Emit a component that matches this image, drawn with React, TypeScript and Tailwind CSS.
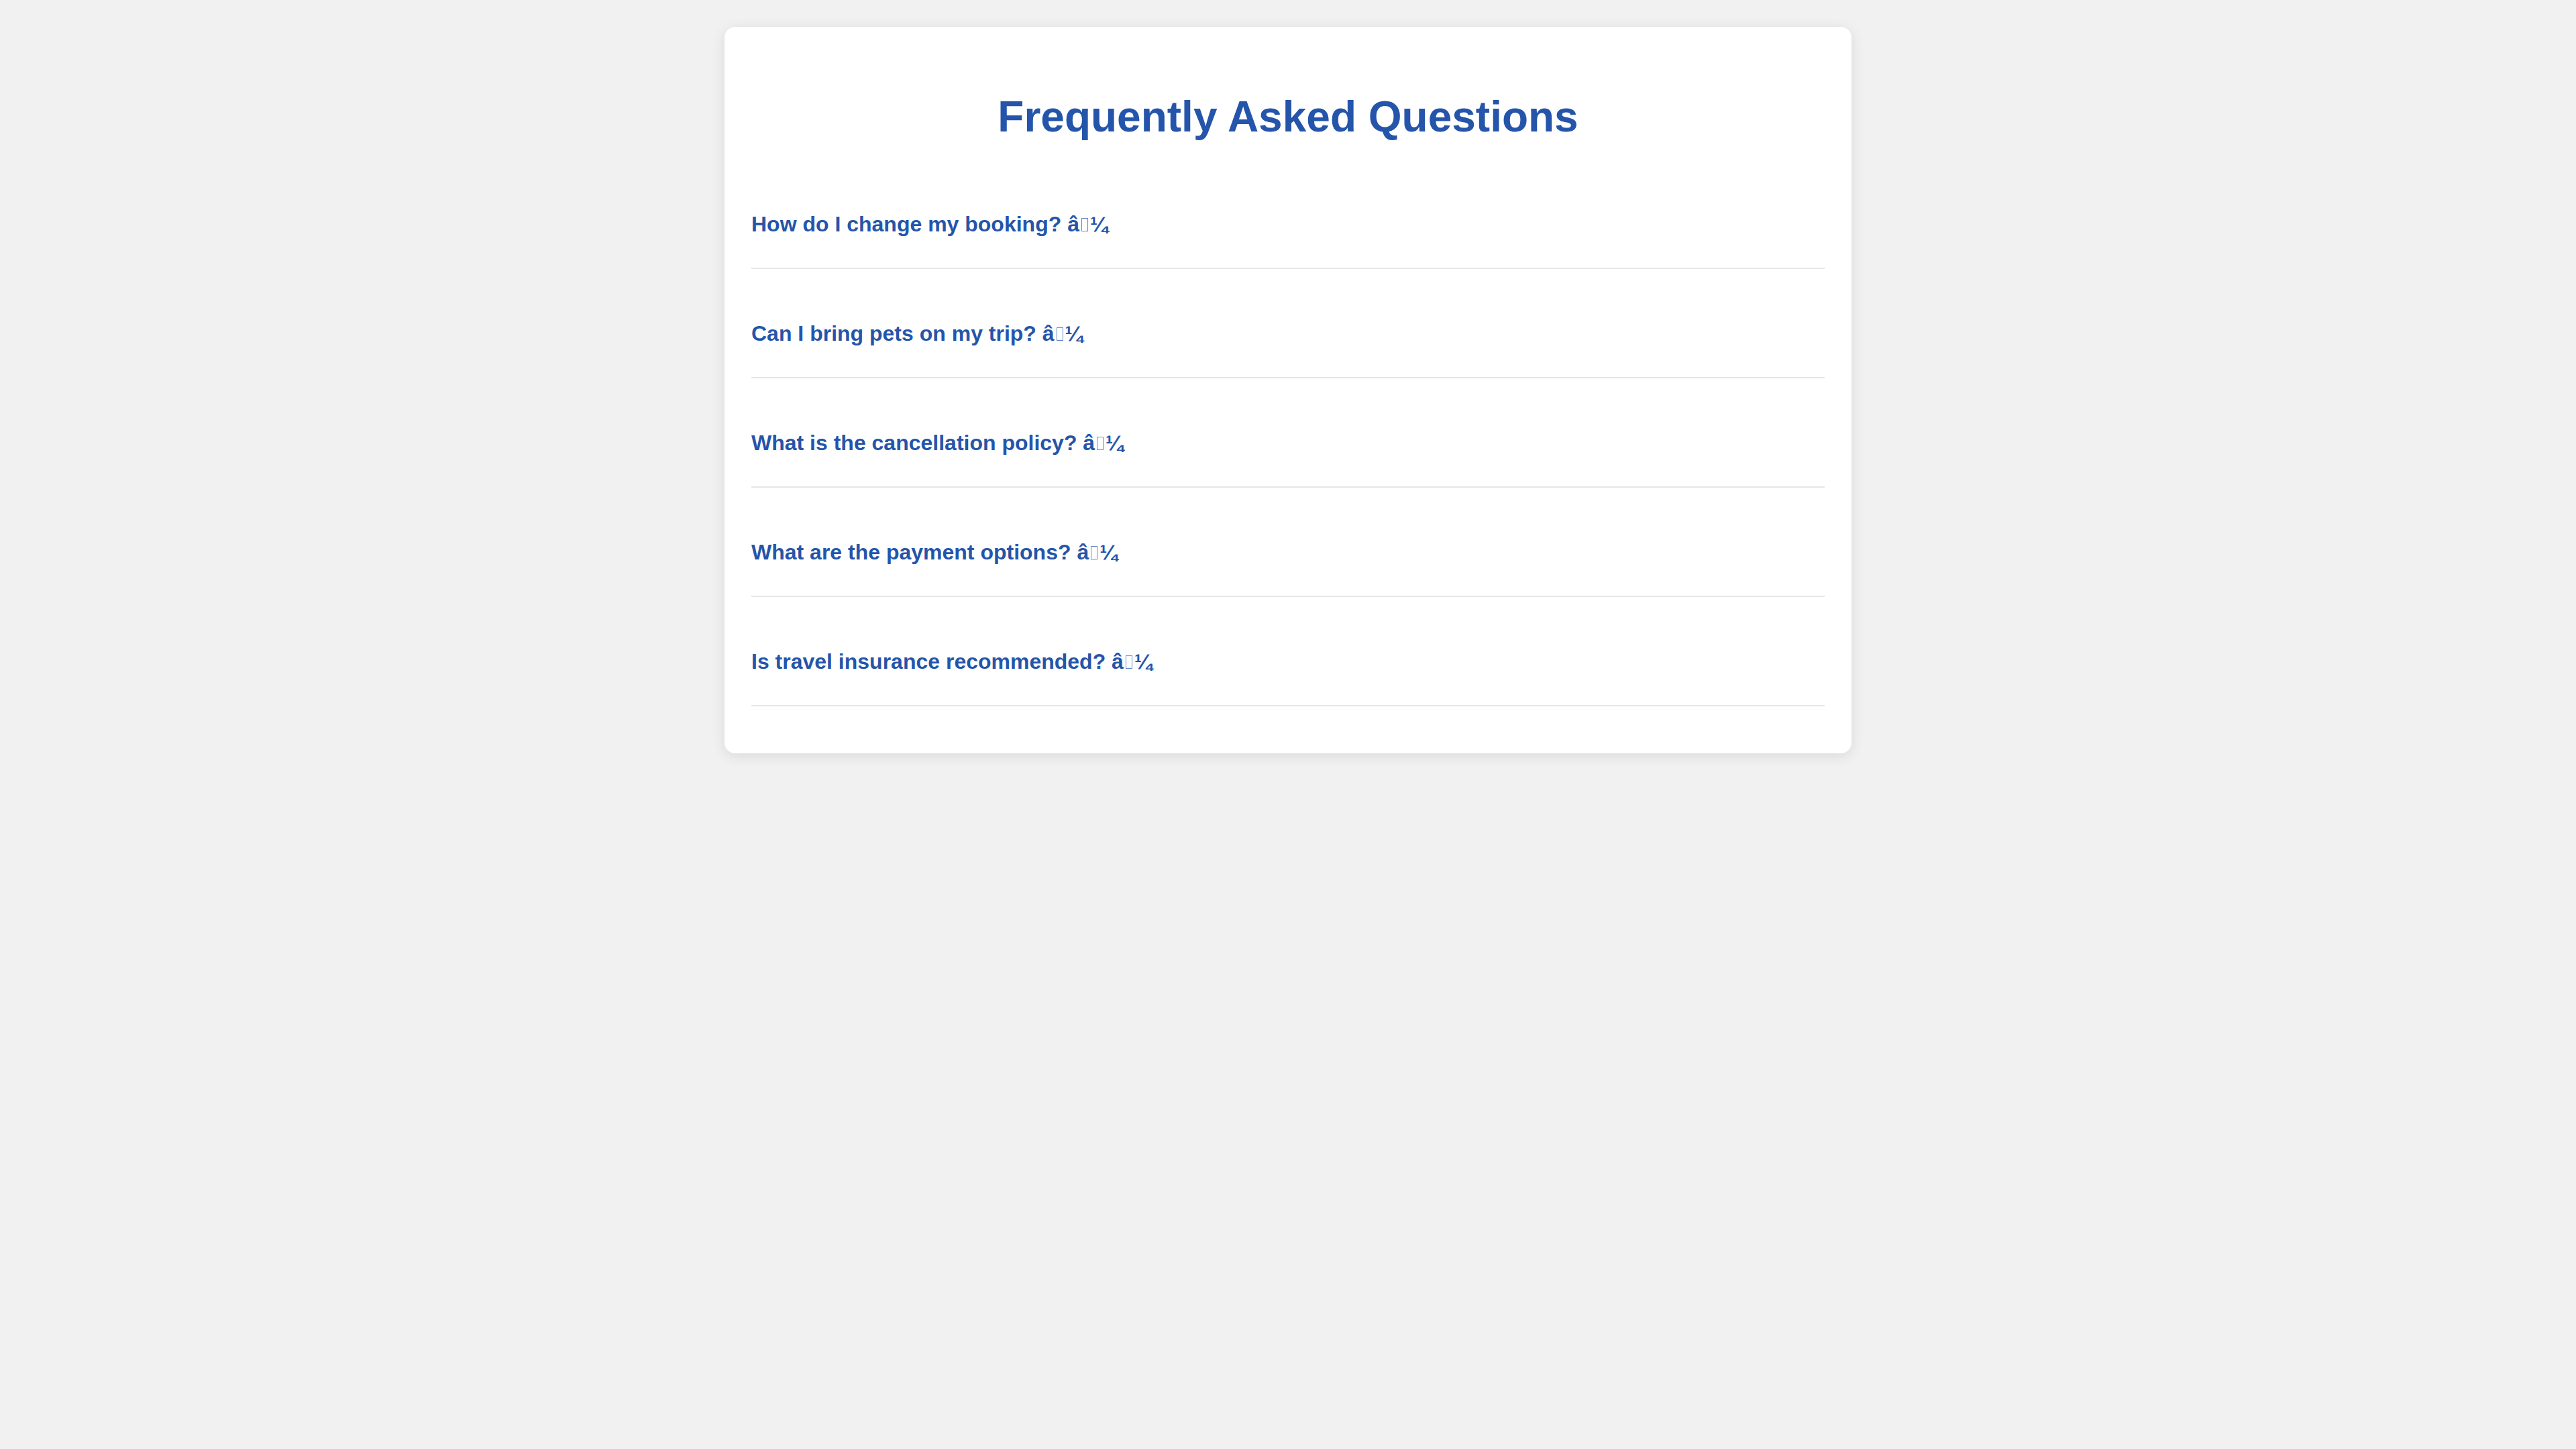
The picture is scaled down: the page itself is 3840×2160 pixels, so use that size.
const questions = [
  "How do I change my booking?",
  "Can I bring pets on my trip?",
  "What is the cancellation policy?",
  "What are the payment options?",
  "Is travel insurance recommended?",
];

// the arrow arrived mis-decoded in the source page ("â" + missing glyph + "¼"), keep it as shown
function BrokenArrow() {
  return (
    <>
      {"\u00e2"}
      <span className="mx-[3px] inline-block h-[20px] w-[10px] border-[1.5px] border-[#2455aa]/70 align-baseline" />
      {"\u00bc"}
    </>
  );
}

function FaqItem({ question }: { question: string }) {
  return (
    <div className="mb-[30px] border-b-2 border-[#e6e6e6] pt-[48px] pb-[46px]">
      <button
        type="button"
        className="block text-left text-[32px] leading-[37px] font-bold text-[#2455aa]"
      >
        {question} <BrokenArrow />
      </button>
    </div>
  );
}

export default function App() {
  return (
    <div className="min-h-screen bg-[#f1f1f1] pt-[40px] font-['Liberation_Sans',Arial,sans-serif]">
      <div className="mx-auto w-[1680px] rounded-[16px] bg-white p-[40px] shadow-[0_4px_20px_rgba(0,0,0,0.1)]">
        <h1 className="mt-[57px] mb-[57px] text-center text-[64px] leading-[74px] font-bold text-[#2455aa]">
          Frequently Asked Questions
        </h1>
        <div>
          {questions.map((q) => (
            <FaqItem key={q} question={q} />
          ))}
        </div>
      </div>
    </div>
  );
}
